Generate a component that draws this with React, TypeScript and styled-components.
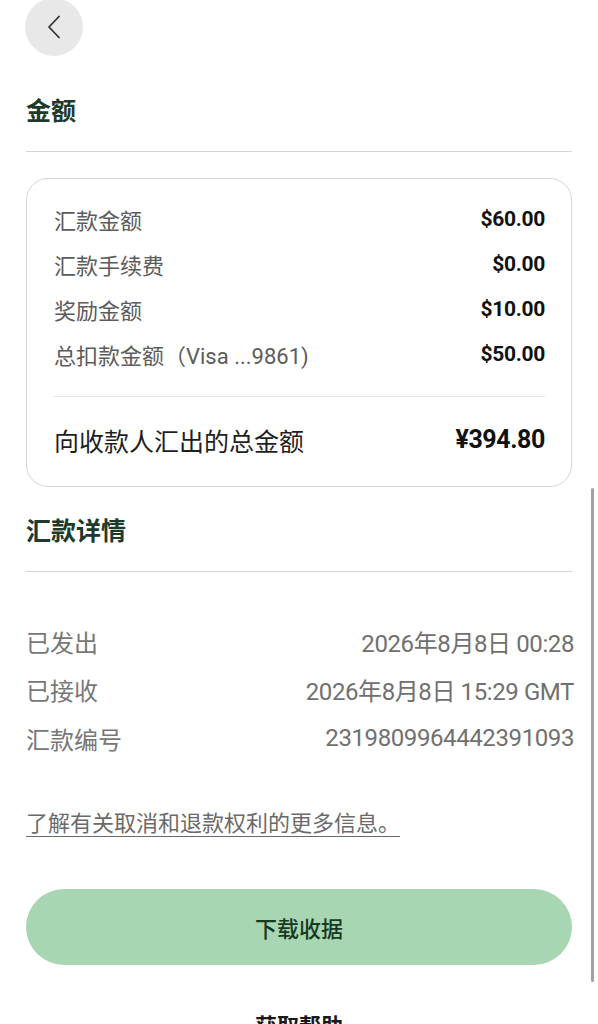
import React from "react";
import styled, { createGlobalStyle } from "styled-components";

const Global = createGlobalStyle`
  html, body { margin: 0; padding: 0; background: #ffffff; }
  body {
    font-family: "Roboto", "Noto Sans CJK SC", sans-serif;
    -webkit-font-smoothing: antialiased;
  }
  * { box-sizing: border-box; }
`;

const Page = styled.div`
  position: relative;
  width: 598px;
  height: 1024px;
  overflow: hidden;
  padding: 0 26px;
  display: flex;
  flex-direction: column;
`;

const BackButton = styled.button`
  width: 58px;
  height: 58px;
  margin: -2px 0 0 -1px;
  border: none;
  border-radius: 50%;
  background: #e8e8e8;
  display: flex;
  align-items: center;
  justify-content: center;
  padding: 0;
  flex-shrink: 0;
`;

const SectionTitle = styled.h2<{ $top: number }>`
  margin: ${(p) => p.$top}px 0 0;
  font-size: 25px;
  line-height: 34px;
  font-weight: 700;
  color: #1d3a2c;
`;

const Divider = styled.div<{ $top: number }>`
  margin-top: ${(p) => p.$top}px;
  height: 1px;
  background: #d4d4d4;
  flex-shrink: 0;
`;

const Card = styled.div`
  margin-top: 26px;
  border: 1px solid #d6d6d6;
  border-radius: 22px;
  padding: 17px 26px 24px 27px;
  display: flex;
  flex-direction: column;
`;

const CardRow = styled.div`
  display: flex;
  justify-content: space-between;
  align-items: center;
  height: 45px;
`;

const CardLabel = styled.span`
  font-size: 22px;
  color: #5c5c5c;
`;

const CardValue = styled.span`
  font-size: 21px;
  font-weight: 700;
  color: #111111;
  letter-spacing: -0.3px;
`;

const InnerDivider = styled.div`
  margin: 20px 0 20px;
  height: 1px;
  background: #e4e4e4;
`;

const TotalLabel = styled.span`
  font-size: 25px;
  color: #1e1e1e;
`;

const TotalValue = styled.span`
  font-size: 25px;
  font-weight: 700;
  color: #111111;
  letter-spacing: -0.4px;
`;

const DetailList = styled.div`
  margin-top: 45px;
  display: flex;
  flex-direction: column;
`;

const DetailRow = styled.div`
  display: flex;
  justify-content: space-between;
  align-items: center;
  height: 48.5px;
  margin-right: -2px;
`;

const DetailLabel = styled.span`
  font-size: 24px;
  color: #777777;
`;

const DetailValue = styled.span`
  font-size: 24px;
  color: #707070;
  letter-spacing: -0.4px;
`;

const InfoLink = styled.a`
  margin-top: 45px;
  align-self: flex-start;
  font-size: 22px;
  line-height: 32px;
  color: #6a6a6a;
  text-decoration: underline;
  text-underline-offset: 5px;
  text-decoration-thickness: 1px;
`;

const PrimaryButton = styled.button`
  margin-top: 49px;
  height: 76px;
  border: none;
  border-radius: 38px;
  background: #a8d5b2;
  color: #163b22;
  font-family: inherit;
  font-size: 22px;
  font-weight: 500;
  flex-shrink: 0;
`;

const HelpText = styled.div`
  margin-top: 46px;
  text-align: center;
  font-size: 22px;
  line-height: 32px;
  font-weight: 700;
  color: #1a1a1a;
`;

const ScrollBar = styled.div`
  position: absolute;
  left: 591px;
  top: 488px;
  width: 3px;
  height: 494px;
  border-radius: 2px;
  background: #a2a2a2;
`;

const cardRows = [
  { label: "汇款金额", value: "$60.00" },
  { label: "汇款手续费", value: "$0.00" },
  { label: "奖励金额", value: "$10.00" },
  { label: "总扣款金额（Visa ...9861)", value: "$50.00" },
];

const details = [
  { label: "已发出", value: "2026年8月8日 00:28" },
  { label: "已接收", value: "2026年8月8日 15:29 GMT" },
  { label: "汇款编号", value: "2319809964442391093" },
];

export default function App() {
  return (
    <>
      <Global />
      <Page>
        <BackButton aria-label="返回">
          <svg width="14" height="24" viewBox="0 0 14 24" fill="none">
            <path d="M12 1.5 L2 12 L12 22.5" stroke="#333" strokeWidth="1.8" strokeLinecap="round" strokeLinejoin="round" />
          </svg>
        </BackButton>

        <SectionTitle $top={39}>金额</SectionTitle>
        <Divider $top={22} />

        <Card>
          {cardRows.map((r) => (
            <CardRow key={r.label}>
              <CardLabel>{r.label}</CardLabel>
              <CardValue>{r.value}</CardValue>
            </CardRow>
          ))}
          <InnerDivider />
          <CardRow>
            <TotalLabel>向收款人汇出的总金额</TotalLabel>
            <TotalValue>¥394.80</TotalValue>
          </CardRow>
        </Card>

        <SectionTitle $top={28}>汇款详情</SectionTitle>
        <Divider $top={22} />

        <DetailList>
          {details.map((d) => (
            <DetailRow key={d.label}>
              <DetailLabel>{d.label}</DetailLabel>
              <DetailValue>{d.value}</DetailValue>
            </DetailRow>
          ))}
        </DetailList>

        <InfoLink>了解有关取消和退款权利的更多信息。</InfoLink>

        <PrimaryButton>下载收据</PrimaryButton>

        <HelpText>获取帮助</HelpText>
        <ScrollBar />
      </Page>
    </>
  );
}
